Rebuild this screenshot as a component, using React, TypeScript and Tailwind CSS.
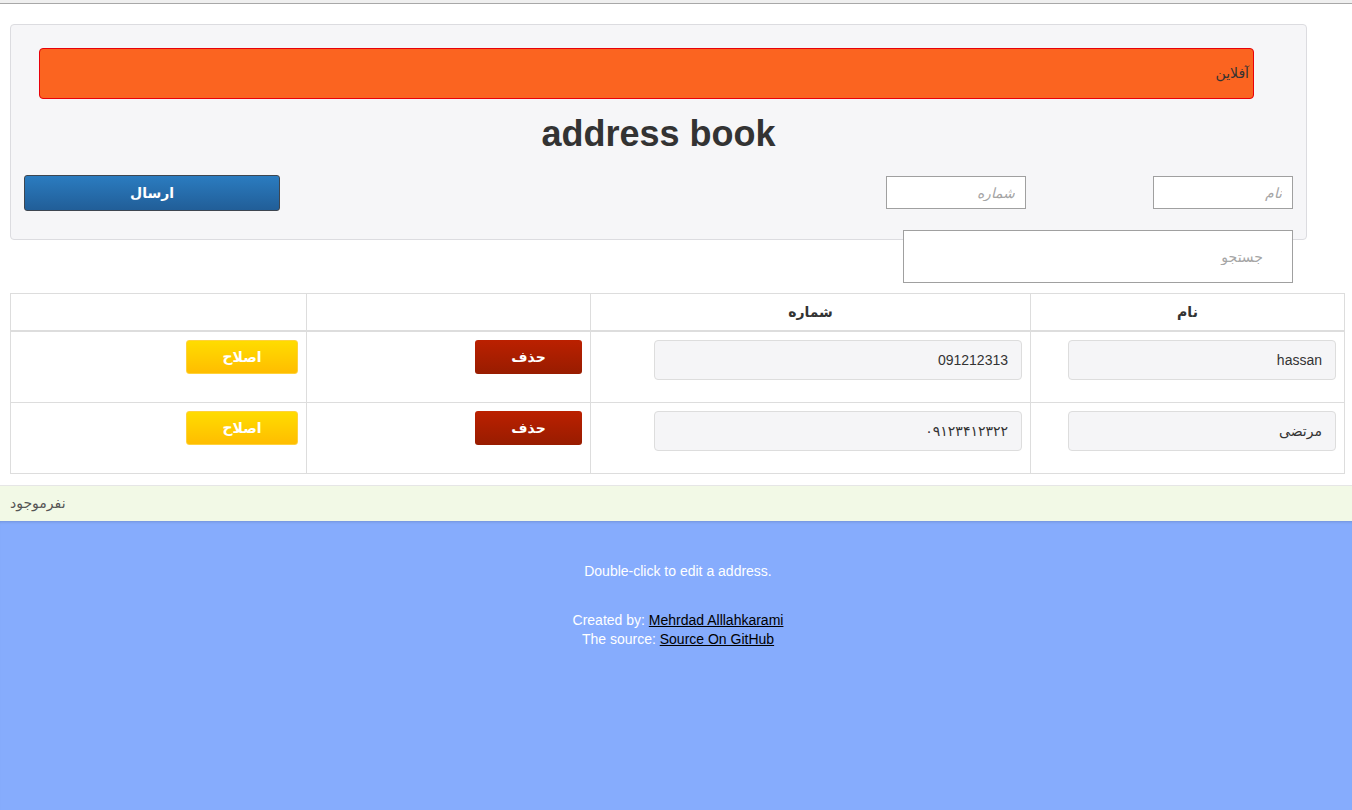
import React from "react";

const font = "font-['Liberation_Sans','DejaVu_Sans',sans-serif]";

function Row({ name, num }: { name: string; num: string }) {
  return (
    <>
      <div className="h-[71px] border-l border-b border-[#ddd] pt-[8px] pr-[8px] flex justify-start">
        <div className="w-[268px] h-[40px] bg-[#f5f5f7] border border-[#ddd] rounded-[4px] flex items-center px-[13px] text-[14px] text-[#333]">
          {name}
        </div>
      </div>
      <div className="h-[71px] border-l border-b border-[#ddd] pt-[8px] pr-[8px] flex justify-start">
        <div className="w-[368px] h-[40px] bg-[#f5f5f7] border border-[#ddd] rounded-[4px] flex items-center px-[13px] text-[14px] text-[#333]">
          {num}
        </div>
      </div>
      <div className="h-[71px] border-l border-b border-[#ddd] pt-[8px] pr-[8px] flex justify-start">
        <button className="w-[107px] h-[34px] rounded-[3px] bg-gradient-to-b from-[#bb2000] to-[#981c00] text-white font-bold text-[14px] flex items-center justify-center">
          حذف
        </button>
      </div>
      <div className="h-[71px] border-b border-[#ddd] pt-[8px] pr-[8px] flex justify-start">
        <button className="w-[112px] h-[34px] rounded-[3px] bg-gradient-to-b from-[#ffdc00] to-[#ffbd00] border border-[#ffd23a] text-white font-bold text-[14px] flex items-center justify-center">
          اصلاح
        </button>
      </div>
    </>
  );
}

export default function App() {
  return (
    <div className={`${font} min-h-screen flex flex-col bg-white text-[#333]`}>
      <div className="h-[4px] bg-[#efefef] border-b border-[#a8a8a8]" />

      <div className="ml-[10px] mt-[20px] w-[1297px] bg-[#f6f6f8] border border-[#dcdce0] rounded-[4px] pt-[23px] pb-[28px]">
        <div
          dir="rtl"
          className="ml-[28px] mr-[52px] h-[51px] bg-[#fb6420] border border-[#e8000a] rounded-[4px] flex items-center pr-[4px] text-[14px] text-[#333]"
        >
          آفلاین
        </div>
        <h1 className="mt-[14px] text-center text-[36px] leading-[41px] font-bold text-[#333]">
          address book
        </h1>
        <div className="mt-[21px] px-[13px] flex items-start justify-between">
          <button className="w-[256px] h-[36px] rounded-[3px] border border-[#3e4650] bg-gradient-to-b from-[#2b7cc0] to-[#215e98] text-white font-bold text-[14px] flex items-center justify-center">
            ارسال
          </button>
          <div className="flex gap-[127px] mt-[1px]">
            <input
              dir="rtl"
              placeholder="شماره"
              className="w-[140px] h-[33px] bg-white border border-[#a0a0a0] px-[10px] text-[14px] placeholder:italic placeholder:text-[#a5a5a5] outline-none"
            />
            <input
              dir="rtl"
              placeholder="نام"
              className="w-[140px] h-[33px] bg-white border border-[#a0a0a0] px-[10px] text-[14px] placeholder:italic placeholder:text-[#a5a5a5] outline-none"
            />
          </div>
        </div>
      </div>

      <div className="-mt-[10px] ml-[903px] w-[390px] h-[53px]">
        <input
          dir="rtl"
          placeholder="جستجو"
          className="w-[390px] h-[53px] bg-white border border-[#a0a0a0] pr-[29px] pl-[10px] text-[14px] placeholder:text-[#a5a5a5] outline-none"
        />
      </div>

      <div
        dir="rtl"
        className="mt-[10px] ml-[10px] w-[1335px] border-t border-l border-r border-[#ddd] grid grid-cols-[314px_440px_284px_295px] text-[14px]"
      >
        <div className="h-[38px] border-l border-b-2 border-[#ddd] flex items-center justify-center font-bold">
          نام
        </div>
        <div className="h-[38px] border-l border-b-2 border-[#ddd] flex items-center justify-center font-bold">
          شماره
        </div>
        <div className="h-[38px] border-l border-b-2 border-[#ddd]" />
        <div className="h-[38px] border-b-2 border-[#ddd]" />
        <Row name="hassan" num="091212313" />
        <Row name="مرتضی" num="۰۹۱۲۳۴۱۲۳۲۲" />
      </div>

      <div className="mt-[11px] h-[36px] border-t border-[#e6e6e6] bg-[#f2f9e6] flex items-center pl-[10px] text-[14px] text-[#555]">
        نفرموجود
      </div>

      <div className="flex-1 bg-[#86acfd] shadow-[inset_0_3px_3px_-2px_rgba(0,0,0,0.15)] text-white text-[14px] leading-[19px] text-center pt-[41px] pl-[4px]">
        <p>Double-click to edit a address.</p>
        <p className="mt-[30px]">
          Created by: <a className="text-black underline">Mehrdad Alllahkarami</a>
        </p>
        <p>
          The source: <a className="text-black underline">Source On GitHub</a>
        </p>
      </div>
    </div>
  );
}
